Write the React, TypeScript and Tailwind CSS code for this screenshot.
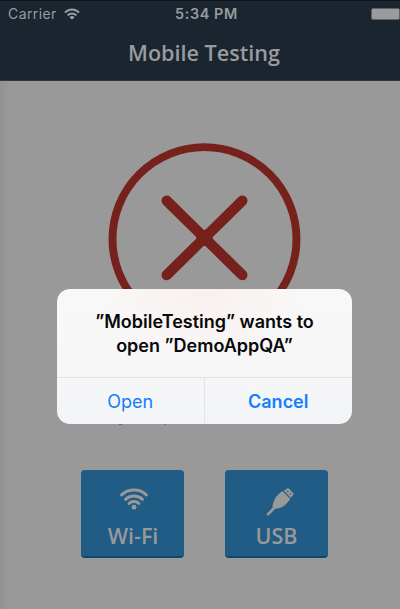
function StatusWifi() {
  return (
    <svg className="h-[12px] w-[16px]" viewBox="0 0 16 12" fill="none" stroke="#999b9e" strokeWidth="2">
      <path d="M0.9 4.6C5 .5 11 .5 15.1 4.6" />
      <path d="M3.5 7.4C6.2 4.7 9.8 4.7 12.5 7.4" />
      <path d="M8 11.7 5.4 9.2C6.9 7.7 9.1 7.7 10.6 9.2Z" fill="#999b9e" stroke="none" />
    </svg>
  );
}

function WifiIcon() {
  return (
    <svg className="h-[22px] w-[30px]" viewBox="0 0 30 22" fill="none" stroke="#999" strokeWidth="3" strokeLinecap="round">
      <path d="M2.6 6.9C9.5 .4 20.5 .4 27.4 6.9" />
      <path d="M6.5 11.3C11.1 6.9 18.9 6.9 23.5 11.3" />
      <path d="M10.2 15.4C12.9 12.9 17.1 12.9 19.8 15.4" />
      <circle cx="15" cy="19.2" r="2.4" fill="#999" stroke="none" />
    </svg>
  );
}

function UsbIcon() {
  return (
    <svg className="h-[28px] w-[28px]" viewBox="0 0 28 28" fill="#999">
      <path d="M15.6 3.6Q16.4 2.9 17.2 3.7L23.7 10.2Q24.5 11 23.8 11.8L19.4 16.8Q17 19.4 12.6 20.2L9.3 20.8 2.9 27.2Q2 28 1.1 27.1T.9 25.4L6.9 19.3 6.3 18.2 8.2 12.3Q9.2 9 11.8 7Z" />
      <path d="m17.6 3 3.6-2.5Q22 0 22.7.6L27.3 5.2Q27.9 5.9 27.4 6.7L24.6 10Z" />
      <path d="m17.7 3.3 6.4 6.4" stroke="#205c85" strokeWidth=".9" />
      <path d="m21.3 2.9 1.1 1.1M23.9 5.5l1.1 1.1" stroke="#205c85" strokeWidth="1.3" />
    </svg>
  );
}

export default function App() {
  return (
    <div className="relative flex h-[609px] w-[400px] flex-col overflow-hidden bg-[#999999] font-['Open_Sans',sans-serif]">
      <header className="flex h-[81px] shrink-0 flex-col border-t border-b border-t-[#0d1319] border-b-[#303841] bg-[#1b252f]">
        <div className="grid h-[25px] grid-cols-3 items-center pl-[8px] font-['Inter',sans-serif] text-[14px] text-[#999b9e]">
          <div className="flex items-center gap-[7px]">
            <span className="tracking-[0.4px]">Carrier</span>
            <StatusWifi />
          </div>
          <span className="pl-[5px] text-center text-[14.4px] font-semibold tracking-[0.6px] whitespace-nowrap">5:34 PM</span>
          <div className="flex justify-end">
            <span className="h-[12px] w-[29px] rounded-[2px] border border-[#59616a] bg-[#999b9e]" />
          </div>
        </div>
        <h1 className="ml-[8px] text-center text-[21.6px] leading-[53px] font-semibold text-[#999b9e]">Mobile Testing</h1>
      </header>

      <main className="flex grow flex-col items-center bg-linear-to-r from-[#929292] to-[#999999] to-[10px] pl-[9px]">
        <svg className="mt-[61px] h-[193px] w-[193px] shrink-0" viewBox="0 0 193 193" fill="none" stroke="#76211b">
          <circle cx="96.5" cy="97.1" r="92" strokeWidth="7.9" />
          <path d="M58.7 58.7 134.3 133M134.3 58.7 58.7 133" strokeWidth="10.4" strokeLinecap="round" />
          <circle cx="96.5" cy="95.9" r="8.2" fill="#76211b" stroke="none" />
        </svg>
        <div className="mt-[135px] flex gap-[41px]">
          <button className="flex h-[88px] w-[103px] flex-col items-center rounded-[4px] border-b-2 border-[#0b4973] bg-[#205c85] pt-[18px]">
            <span className="ml-[2px] flex"><WifiIcon /></span>
            <span className="mt-[10px] ml-[1px] text-[21.5px] leading-[32px] font-semibold text-[#999]">Wi-Fi</span>
          </button>
          <button className="flex h-[88px] w-[103px] flex-col items-center rounded-[4px] border-b-2 border-[#0b4973] bg-[#205c85] pt-[18px]">
            <span className="ml-[6px] flex"><UsbIcon /></span>
            <span className="mt-[4px] text-[21.5px] leading-[32px] font-semibold text-[#999]">USB</span>
          </button>
        </div>
      </main>

      <div className="absolute top-[424px] left-[119px] flex gap-[42px]">
        <i className="h-px w-[3px] bg-[#666]" />
        <i className="h-px w-[2px] bg-[#777]" />
      </div>

      <div role="dialog" className="absolute top-[289px] left-[57px] flex h-[135px] w-[295px] flex-col overflow-hidden rounded-[13px] bg-[#f7f7f7] bg-[radial-gradient(ellipse_110px_80px_at_50%_0%,#f9f0ef,transparent),linear-gradient(#f9f8f8,#f7f7f8_60%,#f2f4f7)] font-['Inter',sans-serif]">
        <p className="h-[88px] pt-[21px] text-center text-[18px] leading-[24px] font-semibold text-[#080808]">
          ”MobileTesting” wants to
          <br />
          open ”DemoAppQA”
        </p>
        <div className="grid grow grid-cols-2 border-t border-[#e3e4e6] text-[18px] text-[#147efb]">
          <button className="border-r border-[#e3e4e6]">Open</button>
          <button className="font-semibold">Cancel</button>
        </div>
      </div>
    </div>
  );
}
